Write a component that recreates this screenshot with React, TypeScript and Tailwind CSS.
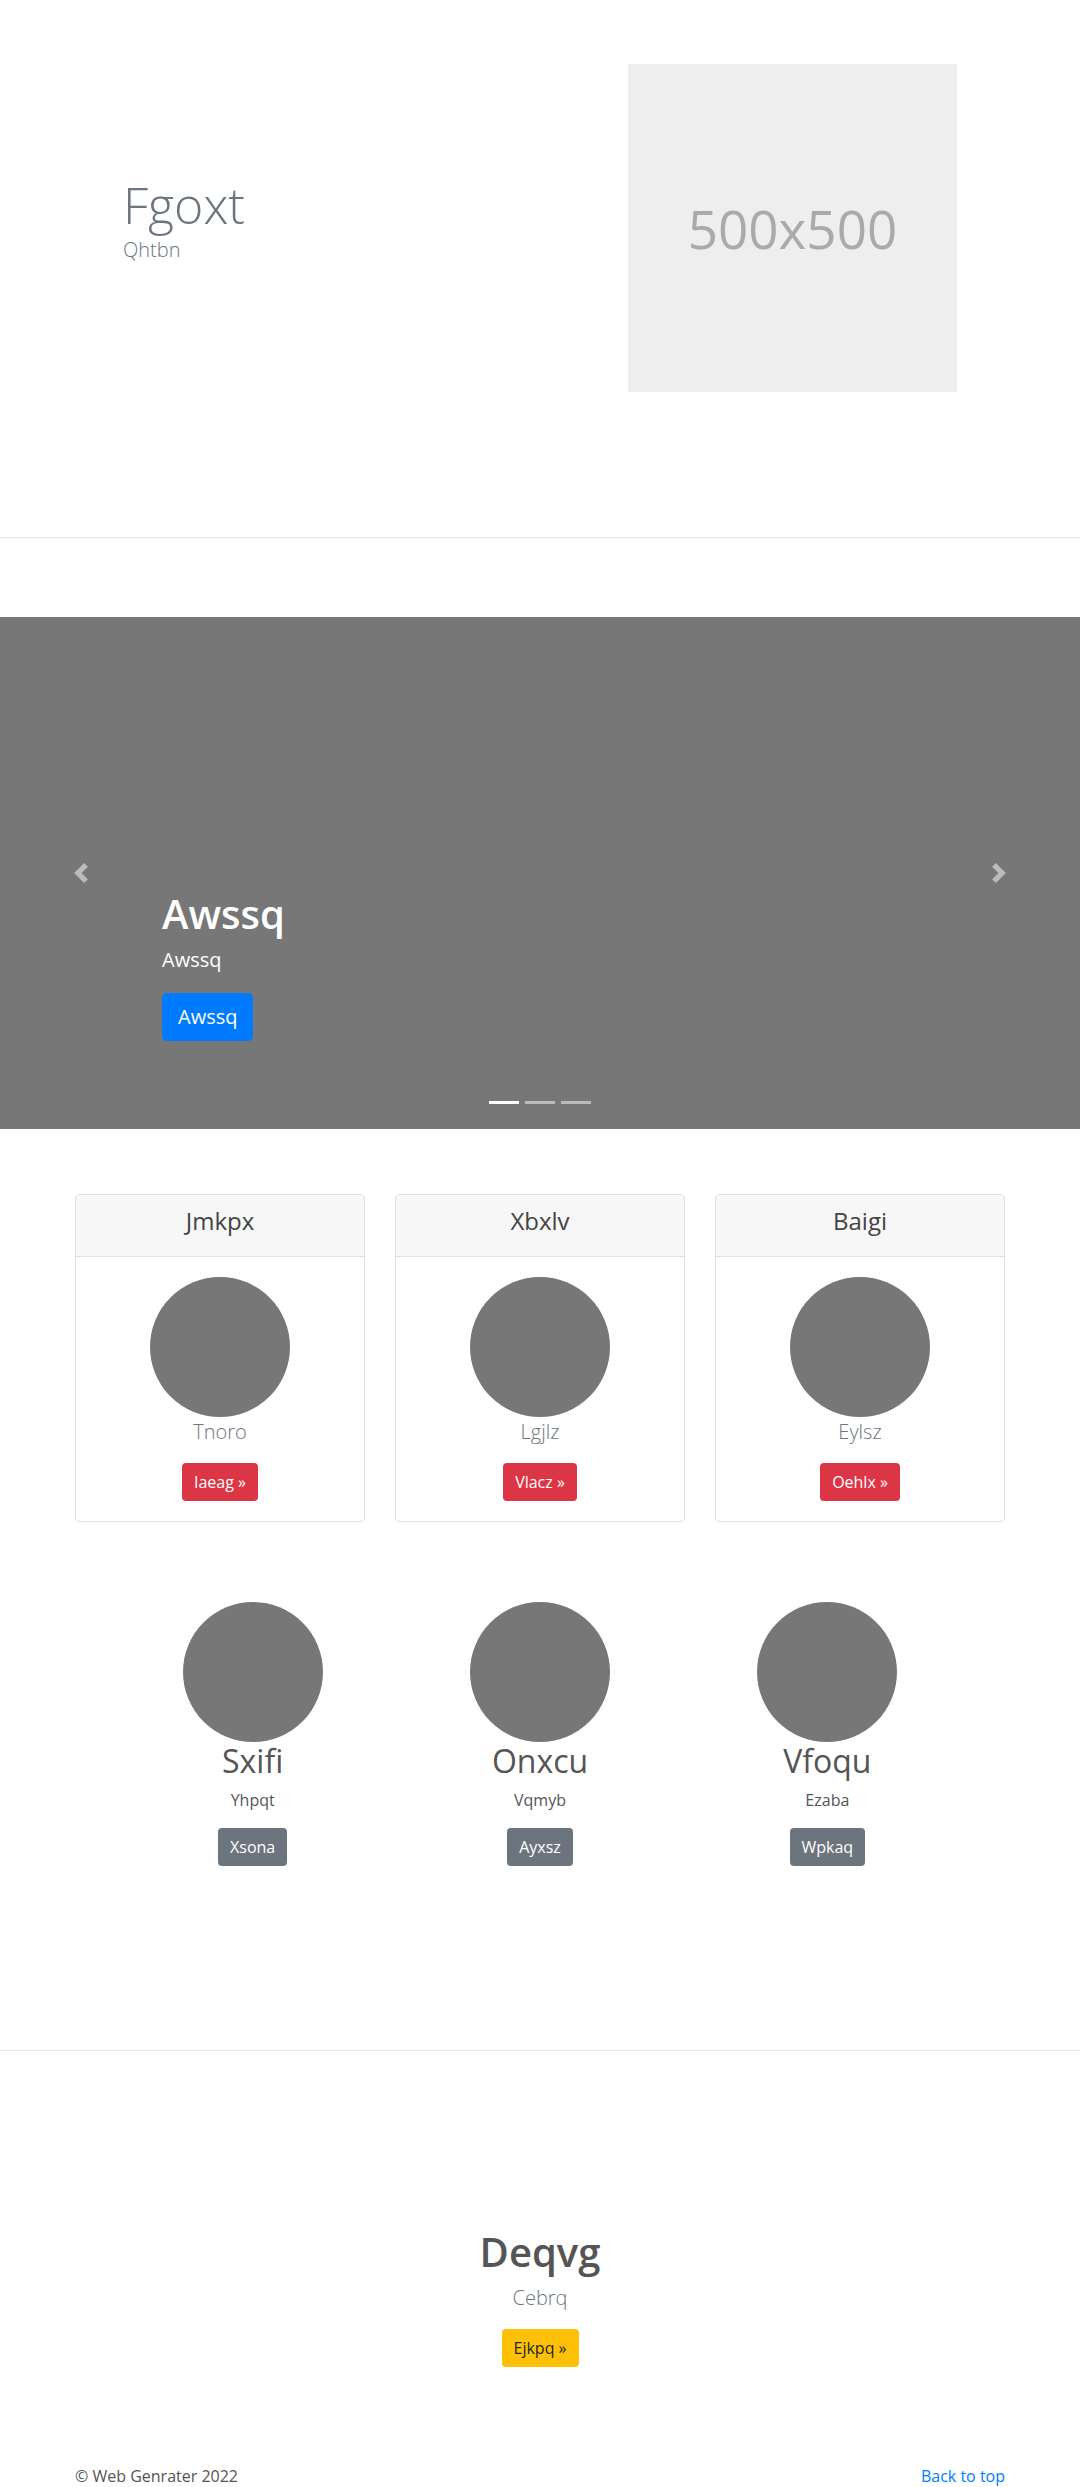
import React from "react";

function ChevronLeft() {
  return (
    <svg width="20" height="20" viewBox="0 0 8 8" className="opacity-50">
      <path fill="#fff" d="M5.25 0l-4 4 4 4 1.5-1.5-2.5-2.5 2.5-2.5-1.5-1.5z" />
    </svg>
  );
}

function ChevronRight() {
  return (
    <svg width="20" height="20" viewBox="0 0 8 8" className="opacity-50">
      <path fill="#fff" d="M2.75 0l-1.5 1.5 2.5 2.5-2.5 2.5 1.5 1.5 4-4-4-4z" />
    </svg>
  );
}

const cards = [
  { title: "Jmkpx", lead: "Tnoro", btn: "Iaeag »" },
  { title: "Xbxlv", lead: "Lgjlz", btn: "Vlacz »" },
  { title: "Baigi", lead: "Eylsz", btn: "Oehlx »" },
];

const people = [
  { name: "Sxifi", sub: "Yhpqt", btn: "Xsona" },
  { name: "Onxcu", sub: "Vqmyb", btn: "Ayxsz" },
  { name: "Vfoqu", sub: "Ezaba", btn: "Wpkaq" },
];

export default function App() {
  return (
    <div className="bg-white text-[#555] [font-family:'Open_Sans','Noto_Sans',Arial,sans-serif]">
      {/* Hero */}
      <section className="h-[538px] border-b border-[#e6e6e6]">
        <div className="mx-auto flex w-[930px] px-12 pt-16">
          <div className="flex h-[328px] flex-1 flex-col justify-center">
            <h1 className="text-[50px] font-light leading-[60px] text-[#6c757d]">Fgoxt</h1>
            <p className="mb-4 text-[20px] font-light leading-[30px] text-[#6c757d]">Qhtbn</p>
          </div>
          <div className="flex h-[328px] w-[329px] items-center justify-center bg-[#eeeeee]">
            <span className="text-[53px] leading-none text-[#aaaaaa]">500x500</span>
          </div>
        </div>
      </section>

      {/* Carousel */}
      <section className="relative mt-[79px] h-[512px] bg-[#777777]">
        <div className="absolute inset-y-0 left-0 flex w-[15%] items-center justify-center">
          <ChevronLeft />
        </div>
        <div className="absolute inset-y-0 right-0 flex w-[15%] items-center justify-center">
          <ChevronRight />
        </div>
        <div className="absolute bottom-[88px] left-[15%] right-[15%] text-white">
          <h1 className="mb-[7px] text-[40px] font-semibold leading-[48px]">Awssq</h1>
          <p className="mb-[18px] text-[20px] font-medium leading-[30px]">Awssq</p>
          <button className="h-[48px] rounded-[5px] bg-[#007bff] px-4 text-[20px] leading-[30px] text-white">
            Awssq
          </button>
        </div>
        <div className="absolute bottom-[25px] left-0 right-0 flex justify-center gap-[6px]">
          <span className="h-[3px] w-[30px] bg-white" />
          <span className="h-[3px] w-[30px] bg-white opacity-50" />
          <span className="h-[3px] w-[30px] bg-white opacity-50" />
        </div>
      </section>

      {/* Cards */}
      <section className="mx-auto mt-[65px] grid w-[930px] grid-cols-3 gap-[30px]">
        {cards.map((c) => (
          <div key={c.title} className="rounded border border-[#dfdfdf] bg-white">
            <div className="border-b border-[#dfdfdf] bg-[#f7f7f7] px-5 py-3 text-center">
              <h4 className="mb-2 text-[24px] font-medium leading-[28.8px] text-[#444]">{c.title}</h4>
            </div>
            <div className="p-5 text-center">
              <div className="mx-auto h-[140px] w-[140px] rounded-full bg-[#777777]" />
              <p className="mb-4 text-[20px] font-light leading-[30px] text-[#6c757d]">{c.lead}</p>
              <button className="h-[38px] rounded bg-[#dc3545] px-3 text-[16px] leading-6 text-white">
                {c.btn}
              </button>
            </div>
          </div>
        ))}
      </section>

      {/* People */}
      <section className="mx-auto mt-[80px] grid w-[862px] grid-cols-3">
        {people.map((p) => (
          <div key={p.name} className="flex flex-col items-center text-center">
            <div className="h-[140px] w-[140px] rounded-full bg-[#777777]" />
            <h2 className="mb-2 text-[32px] font-normal leading-[38.4px] text-[#555]">{p.name}</h2>
            <p className="mb-4 text-[16px] leading-6 text-[#555]">{p.sub}</p>
            <button className="h-[38px] rounded bg-[#6c757d] px-3 text-[16px] leading-6 text-white">
              {p.btn}
            </button>
          </div>
        ))}
      </section>

      <div className="mt-[184px] h-px bg-[#e6e6e6]" />

      {/* Call to action */}
      <section className="flex flex-col items-center pt-[177px] text-center">
        <h1 className="mb-[7px] text-[40px] font-semibold leading-[48px] text-[#555]">Deqvg</h1>
        <p className="mb-4 text-[20px] font-light leading-[30px] text-[#6c757d]">Cebrq</p>
        <button className="h-[38px] rounded bg-[#ffc107] px-3 text-[16px] leading-6 text-[#212529]">
          Ejkpq »
        </button>
      </section>

      {/* Footer */}
      <footer className="mx-auto mt-[97px] flex w-[930px] justify-between">
        <p className="text-[16px] leading-6 text-[#555]">© Web Genrater 2022</p>
        <a href="#" className="text-[16px] leading-6 text-[#007bff]">
          Back to top
        </a>
      </footer>
    </div>
  );
}
